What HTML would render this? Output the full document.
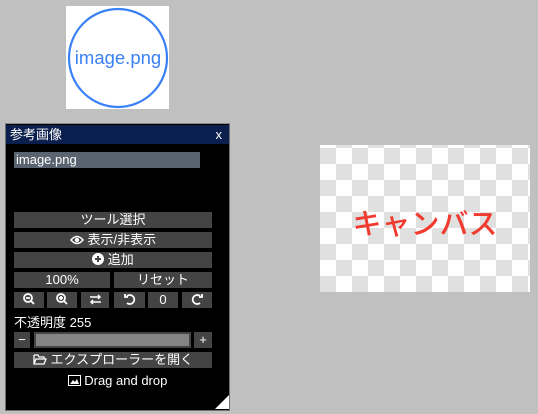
<!DOCTYPE html>
<html><head><meta charset="utf-8"><style>
*{margin:0;padding:0;box-sizing:border-box}
body{width:538px;height:414px;background:#c0c0c0;position:relative;overflow:hidden;font-family:"Liberation Sans","Noto Sans CJK JP",sans-serif;}
.abs{position:absolute}
.thumb{left:66px;top:6px;width:103px;height:103px;background:#fff}
.panel{left:5px;top:123px;width:225px;height:288px;background:#000;border:1px solid #707070;border-top-color:#8a8a8a}
.title{left:0;top:1px;width:223px;height:19px;background:#0a1f4d;color:#fff;font-size:13px;line-height:19px;padding-left:4px}
.title span{position:absolute;right:7px;top:0}
.btn{position:absolute;background:#444;color:#fff;font-size:13px;line-height:16px;height:16px;text-align:center;white-space:nowrap}
.canvas{left:320px;top:145px;width:210px;height:147px;background-color:#fff;
background-image:linear-gradient(45deg,#e0e0e0 25%,transparent 25%,transparent 75%,#e0e0e0 75%),linear-gradient(45deg,#e0e0e0 25%,transparent 25%,transparent 75%,#e0e0e0 75%);
background-size:32px 32px;background-position:0 -13px,16px 3px}
</style></head><body>
<div class="abs thumb"><svg width="103" height="103"><circle cx="52" cy="52" r="49" fill="none" stroke="#3a80f6" stroke-width="2.2"/><text x="52" y="58" text-anchor="middle" font-size="18.5" fill="#3a80f6" font-family="Liberation Sans,sans-serif">image.png</text></svg></div>

<div class="abs canvas"><div style="position:absolute;left:0;top:4px;width:210px;text-align:center;line-height:147px;font-size:29px;font-weight:500;color:#f03c30;font-family:'Noto Sans CJK JP',sans-serif">キャンバス</div></div>

<div class="abs panel">
<div class="abs title">参考画像<span>x</span></div>
<div class="abs" style="left:8px;top:28px;width:186px;height:16px;background:#5a6470;color:#fff;font-size:13px;line-height:16px;padding-left:2px">image.png</div>
<div class="btn" style="left:8px;top:88px;width:198px">ツール選択</div>
<div class="btn" style="left:8px;top:108px;width:198px"><svg width="14" height="10" style="vertical-align:-1px"><path d="M1 5Q7 -2 13 5Q7 12 1 5Z" fill="none" stroke="#fff" stroke-width="1.5"/><circle cx="7" cy="5" r="2.2" fill="#fff"/></svg> 表示/非表示</div>
<div class="btn" style="left:8px;top:128px;width:198px"><svg width="12" height="12" style="vertical-align:-1px"><circle cx="6" cy="6" r="6" fill="#fff"/><path d="M6 3V9M3 6H9" stroke="#444" stroke-width="2"/></svg> 追加</div>
<div class="btn" style="left:8px;top:148px;width:96px">100%</div>
<div class="btn" style="left:108px;top:148px;width:98px">リセット</div>
<div class="btn" style="left:8px;top:168px;width:30px"><svg width="12" height="12" style="vertical-align:-1px"><circle cx="5" cy="5" r="4" fill="none" stroke="#fff" stroke-width="1.8"/><path d="M3 5H7M8 8L11 11" stroke="#fff" stroke-width="1.8"/></svg></div>
<div class="btn" style="left:41px;top:168px;width:30px"><svg width="12" height="12" style="vertical-align:-1px"><circle cx="5" cy="5" r="4" fill="none" stroke="#fff" stroke-width="1.8"/><path d="M3 5H7M5 3V7M8 8L11 11" stroke="#fff" stroke-width="1.8"/></svg></div>
<div class="btn" style="left:75px;top:168px;width:28px"><svg width="13" height="11" style="vertical-align:-1px"><path d="M1 3H11M9 1L11 3L9 5M12 8H2M4 6L2 8L4 10" fill="none" stroke="#fff" stroke-width="1.5"/></svg></div>
<div class="btn" style="left:108px;top:168px;width:31px"><svg width="12" height="12" style="vertical-align:-1px"><path d="M3 3A4.5 4.5 0 1 1 3 10M1 1V4H4" fill="none" stroke="#fff" stroke-width="1.8"/></svg></div>
<div class="btn" style="left:142px;top:168px;width:30px">0</div>
<div class="btn" style="left:176px;top:168px;width:30px"><svg width="12" height="12" style="vertical-align:-1px"><path d="M9 3A4.5 4.5 0 1 0 9 10M11 1V4H8" fill="none" stroke="#fff" stroke-width="1.8"/></svg></div>
<div class="abs" style="left:8px;top:188px;color:#fff;font-size:13px">不透明度 255</div>
<div class="btn" style="left:8px;top:208px;width:16px">−</div>
<div class="abs" style="left:28px;top:208px;width:157px;height:16px;background:#848484;border:2px solid #444"></div>
<div class="btn" style="left:188px;top:208px;width:18px">+</div>
<div class="btn" style="left:8px;top:228px;width:198px"><svg width="14" height="11" style="vertical-align:-1px"><path d="M1 1H5L6 3H11V5M1 1V10H11L13 5H3L1 10" fill="none" stroke="#fff" stroke-width="1.3"/></svg> エクスプローラーを開く</div>
<div class="abs" style="left:0;top:249px;width:223px;text-align:center;color:#fff;font-size:13px"><svg width="13" height="11" style="vertical-align:-1px"><rect x="0.5" y="0.5" width="12" height="10" fill="none" stroke="#fff"/><path d="M2 9L5 5L7 7L9 4L11 9Z" fill="#fff"/></svg> Drag and drop</div>
<svg class="abs" style="left:209px;top:271px" width="14" height="14"><path d="M14 0V14H0Z" fill="#fff"/></svg>
</div>
</body></html>
